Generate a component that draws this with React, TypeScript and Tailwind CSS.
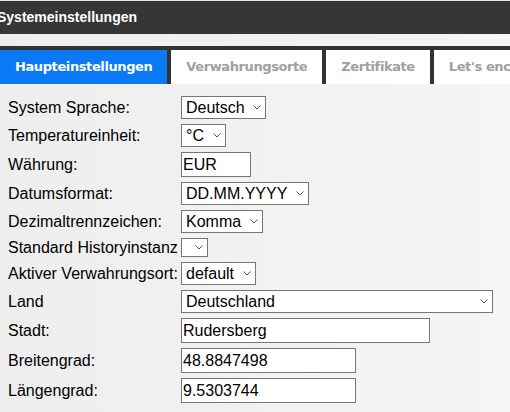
import React from "react";

const tabs = [
  { label: "Haupteinstellungen", active: true },
  { label: "Verwahrungsorte" },
  { label: "Zertifikate" },
  { label: "Let's encrypt" },
];

type Row =
  | { label: string; kind: "select"; value: string; w: number }
  | { label: string; kind: "input"; value: string; w: number };

const rows: Row[] = [
  { label: "System Sprache:", kind: "select", value: "Deutsch", w: 85 },
  { label: "Temperatureinheit:", kind: "select", value: "°C", w: 45 },
  { label: "Währung:", kind: "input", value: "EUR", w: 70 },
  { label: "Datumsformat:", kind: "select", value: "DD.MM.YYYY", w: 128 },
  { label: "Dezimaltrennzeichen:", kind: "select", value: "Komma", w: 82 },
  { label: "Standard Historyinstanz", kind: "select", value: "", w: 27 },
  { label: "Aktiver Verwahrungsort:", kind: "select", value: "default", w: 75 },
  { label: "Land", kind: "select", value: "Deutschland", w: 312 },
  { label: "Stadt:", kind: "input", value: "Rudersberg", w: 249 },
  { label: "Breitengrad:", kind: "input", value: "48.8847498", w: 175 },
  { label: "Längengrad:", kind: "input", value: "9.5303744", w: 175 },
];

function Chevron() {
  return (
    <svg width="8" height="5" viewBox="0 0 8 5" className="shrink-0">
      <path d="M0.5 0.5 L4 4 L7.5 0.5" fill="none" stroke="#505050" strokeWidth="1" />
    </svg>
  );
}

function SelectBox({ value, w }: { value: string; w: number }) {
  return (
    <div
      className={
        "flex items-center justify-between border border-[#767676] bg-white pl-[4px] pr-[4px] text-black " +
        (value ? "h-[23px]" : "h-[19px]")
      }
      style={{ width: w }}
    >
      <span className="leading-none">{value}</span>
      <Chevron />
    </div>
  );
}

export default function App() {
  return (
    <div className="h-[412px] w-[510px] overflow-hidden bg-gradient-to-r from-[#eeeeee] to-[#f5f5f5] font-['Liberation_Sans',Arial,sans-serif]">
      <div className="h-px bg-[#e6e6e6]" />
      <div className="flex h-[33px] items-center bg-[#363636] -ml-[3px] text-[14px] font-bold text-white">
        Systemeinstellungen
      </div>
      <div className="h-[12px]" />
      <div className="flex gap-[4px] whitespace-nowrap bg-[#333333] pt-[4px]">
        {tabs.map((t) => (
          <div
            key={t.label}
            className={
              "flex h-[34px] shrink-0 items-center px-[15px] text-[13px] font-bold font-['DejaVu_Sans',Verdana,sans-serif] tracking-[-0.4px] " +
              (t.active ? "bg-[#0b78f5] text-white" : "bg-white text-[#a0a0a0]")
            }
          >
            {t.label}
          </div>
        ))}
      </div>
      <div className="flex flex-col gap-[5px] pl-[8px] pt-[12px] text-[16px] text-black">
        {rows.map((r) => (
          <div key={r.label} className="flex items-center">
            <div className="w-[173px] shrink-0 whitespace-nowrap leading-none">{r.label}</div>
            {r.kind === "select" ? (
              <SelectBox value={r.value} w={r.w} />
            ) : (
              <input
                readOnly
                defaultValue={r.value}
                className="h-[25px] border border-[#767676] bg-white px-[1px] text-[16px] text-black outline-none"
                style={{ width: r.w }}
              />
            )}
          </div>
        ))}
      </div>
    </div>
  );
}
